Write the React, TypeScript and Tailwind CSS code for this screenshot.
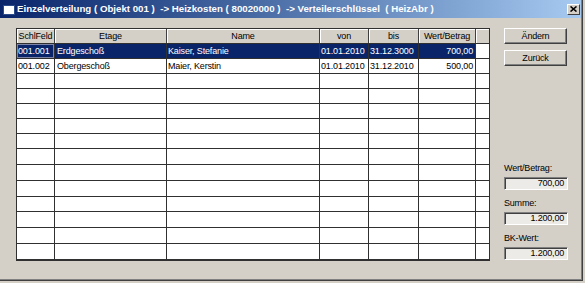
import React from "react";

type Row = { k: string; e: string; n: string; v: string; b: string; w: string; sel?: boolean };

const data: Row[] = [
  { k: "001.001", e: "Erdgeschoß", n: "Kaiser, Stefanie", v: "01.01.2010", b: "31.12.3000", w: "700,00", sel: true },
  { k: "001.002", e: "Obergeschoß", n: "Maier, Kerstin", v: "01.01.2010", b: "31.12.2010", w: "500,00" },
];

const heights = [
  "h-[15px]", "h-[15px]", "h-[15px]", "h-[15px]", "h-[15px]", "h-[15px]", "h-[15px]",
  "h-[16px]", "h-[16px]", "h-[16px]", "h-[15px]", "h-[16px]", "h-[16px]", "h-[16px]",
];

const cols = ["w-[38px]", "w-[112px]", "w-[153px]", "w-[49px]", "w-[50px]", "w-[57px]", "w-[13px]"];
const headers = ["SchlFeld", "Etage", "Name", "von", "bis", "Wert/Betrag", ""];

function Field({ label, value }: { label: string; value: string }) {
  return (
    <div className="flex flex-col">
      <div className="h-[11px] leading-[11px] text-[9px] tracking-[-0.2px] text-black">{label}</div>
      <div className="mt-[3px] h-[13px] w-[64px] border-t border-l border-b border-r border-t-[#808080] border-l-[#808080] border-b-white border-r-white bg-[#ecebe8] shadow-[inset_1px_1px_0_#404040] flex items-center justify-end pr-[3px] text-[9px] tracking-[-0.2px] text-black leading-none">
        {value}
      </div>
    </div>
  );
}

function Button({ label }: { label: string }) {
  return (
    <div className="h-[16px] w-[63px] border-t border-l border-b border-r border-t-white border-l-white border-b-[#404040] border-r-[#404040] bg-[#d4d0c8] shadow-[inset_-1px_-1px_0_#808080] flex items-center justify-center text-[9px] tracking-[-0.2px] text-black leading-none">
      {label}
    </div>
  );
}

export default function App() {
  const rows: (Row | null)[] = [];
  for (let i = 0; i < 14; i++) rows.push(data[i] ?? null);

  return (
    <div
      className="w-[585px] h-[283px] bg-[#d4d0c8] overflow-hidden"
      style={{ fontFamily: '"Liberation Sans", Arial, sans-serif' }}
    >
      <div className="w-[583px] h-[281px] border-r border-b border-[#404040]">
        <div className="w-[582px] h-[280px] border-r border-b border-[#808080] flex flex-col">
          {/* Title bar */}
          <div className="h-[18px] w-full bg-gradient-to-r from-[#0a246a] to-[#a6caf0] flex items-center shrink-0">
            <div className="ml-[3px] mt-[2px] w-[12px] h-[10px] bg-white border border-[#2a4a8a]" />
            <div className="ml-[2px] text-white font-bold text-[9.7px] whitespace-pre leading-none">
              {"Einzelverteilung ( Objekt 001 )  -> Heizkosten ( 80020000 )  -> Verteilerschlüssel  ( HeizAbr )"}
            </div>
            <div className="ml-auto mr-[1px] w-[13px] h-[11px] bg-[#d4d0c8] border-t border-l border-b border-r border-t-white border-l-white border-b-[#404040] border-r-[#404040] flex items-center justify-center">
              <svg width="7" height="6" viewBox="0 0 7 6">
                <path d="M0.5 0.5 L6.5 5.5 M6.5 0.5 L0.5 5.5" stroke="#000" strokeWidth="1.6" />
              </svg>
            </div>
          </div>

          {/* Body */}
          <div className="flex flex-row pt-[10px] pl-[16px]">
            {/* Grid */}
            <div className="border border-[#303030] bg-white flex flex-col text-[9px] tracking-[-0.15px] leading-none">
              <div className="flex flex-row h-[15px] border-b border-[#303030] bg-[#d4d0c8]">
                {headers.map((h, i) => (
                  <div
                    key={i}
                    className={`${cols[i]} h-full border-r border-[#404040] shadow-[inset_1px_1px_0_#ffffff] flex items-center justify-center text-black ${i === 6 ? "border-r-0" : ""}`}
                  >
                    {h}
                  </div>
                ))}
              </div>
              {rows.map((r, ri) => {
                const vals = r ? [r.k, r.e, r.n, r.v, r.b, r.w, ""] : ["", "", "", "", "", "", ""];
                return (
                  <div key={ri} className={`flex flex-row ${heights[ri]} border-b border-[#303030]`}>
                    {vals.map((v, ci) => {
                      const sel = r?.sel && ci < 6;
                      const align = ci === 5 ? "justify-end pr-[2px]" : ci === 1 ? "pl-[2px]" : "pl-[1px]";
                      return (
                        <div
                          key={ci}
                          className={`${cols[ci]} h-full flex items-center ${align} ${ci === 6 ? "" : "border-r border-[#303030]"} ${
                            sel ? "bg-[#0a246a] text-white" : "bg-white text-black"
                          } ${sel && ci === 0 ? "shadow-[inset_0_0_0_1px_#7d84a8]" : ""}`}
                        >
                          {v}
                        </div>
                      );
                    })}
                  </div>
                );
              })}
            </div>

            {/* Right panel */}
            <div className="ml-[14px] flex flex-col">
              <Button label="Ändern" />
              <div className="mt-[6px]">
                <Button label="Zurück" />
              </div>
              <div className="mt-auto mb-[1px] flex flex-col gap-[8px]">
                <Field label="Wert/Betrag:" value="700,00" />
                <Field label="Summe:" value="1.200,00" />
                <Field label="BK-Wert:" value="1.200,00" />
              </div>
            </div>
          </div>
        </div>
      </div>
    </div>
  );
}
